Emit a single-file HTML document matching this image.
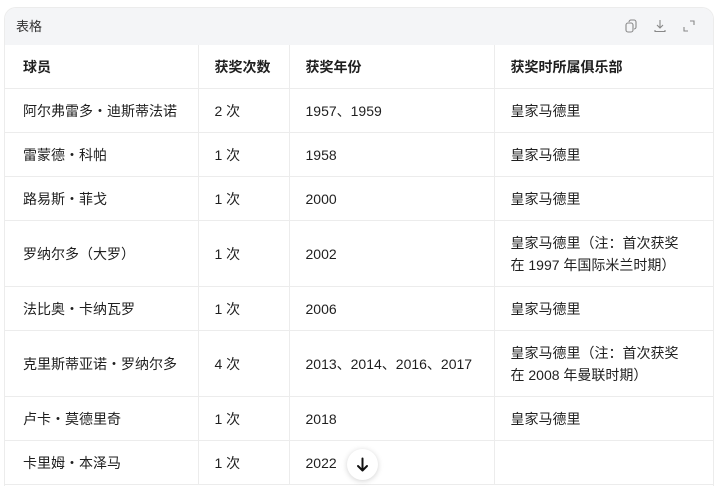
<!DOCTYPE html>
<html><head><meta charset="utf-8"><style>
body{margin:0;background:#fff;width:720px;height:491px;overflow:hidden;font-family:"Liberation Sans","Noto Sans CJK SC",sans-serif;color:#1f1f1f}
.box{position:absolute;left:4px;top:7px;width:708px;height:478px;border:1px solid #ececec;border-radius:12px 12px 0 0;border-bottom:none;overflow:hidden}
.hd{height:37px;background:#f4f5f7;font-size:13px;line-height:37px;padding-left:11px;color:#333;position:relative}
.ic{position:absolute;top:0;color:#888;font-size:12px}
table{border-collapse:collapse;width:708px;table-layout:fixed;font-size:14px}
td,th{border-right:1px solid #ececec;border-bottom:1px solid #ececec;text-align:left;padding:0 0 0 16px;line-height:22px;vertical-align:middle}
td:first-child,th:first-child{padding-left:18px}
td:last-child,th:last-child{border-right:none}
th{height:43px;font-weight:bold}
td{height:43px}
tr.t td{height:65px}
.btn{position:absolute;left:347px;top:449px;width:31px;height:31px;border-radius:50%;background:#fff;box-shadow:0 1px 6px rgba(0,0,0,.18)}
</style></head><body>
<div class="box">
<div class="hd">表格
<svg class="ic" style="left:619px;top:11px" width="14" height="14" viewBox="0 0 14 14" fill="none" stroke="#888" stroke-width="1.1"><rect x="2" y="4" width="7" height="9" rx="2"/><path d="M5 3a2 2 0 0 1 2-2h3a2 2 0 0 1 2 2v5a2 2 0 0 1-2 2"/></svg>
<svg class="ic" style="left:648px;top:11px" width="14" height="14" viewBox="0 0 14 14" fill="none" stroke="#888" stroke-width="1.1"><path d="M7 1v8M4 6l3 3 3-3M2 11v1.5h10V11"/></svg>
<svg class="ic" style="left:677px;top:11px" width="14" height="14" viewBox="0 0 14 14" fill="none" stroke="#888" stroke-width="1.1"><path d="M8 2h4v4M2 8v4h4"/></svg>
</div>
<table>
<colgroup><col style="width:193px"><col style="width:91px"><col style="width:205px"><col></colgroup>
<tr><th>球员</th><th>获奖次数</th><th>获奖年份</th><th>获奖时所属俱乐部</th></tr>
<tr><td>阿尔弗雷多・迪斯蒂法诺</td><td>2 次</td><td>1957、1959</td><td>皇家马德里</td></tr>
<tr><td>雷蒙德・科帕</td><td>1 次</td><td>1958</td><td>皇家马德里</td></tr>
<tr><td>路易斯・菲戈</td><td>1 次</td><td>2000</td><td>皇家马德里</td></tr>
<tr class="t"><td>罗纳尔多（大罗）</td><td>1 次</td><td>2002</td><td>皇家马德里（注：首次获奖<br>在 1997 年国际米兰时期）</td></tr>
<tr><td>法比奥・卡纳瓦罗</td><td>1 次</td><td>2006</td><td>皇家马德里</td></tr>
<tr class="t"><td>克里斯蒂亚诺・罗纳尔多</td><td>4 次</td><td>2013、2014、2016、2017</td><td>皇家马德里（注：首次获奖<br>在 2008 年曼联时期）</td></tr>
<tr><td>卢卡・莫德里奇</td><td>1 次</td><td>2018</td><td>皇家马德里</td></tr>
<tr><td>卡里姆・本泽马</td><td>1 次</td><td>2022</td><td></td></tr>
</table>
</div>
<div class="btn"><svg width="31" height="31" viewBox="0 0 31 31" fill="none" stroke="#111" stroke-width="2" stroke-linecap="round" stroke-linejoin="round"><path d="M15.5 9.5v12M11 17l4.5 4.5L20 17"/></svg></div>
</body></html>
